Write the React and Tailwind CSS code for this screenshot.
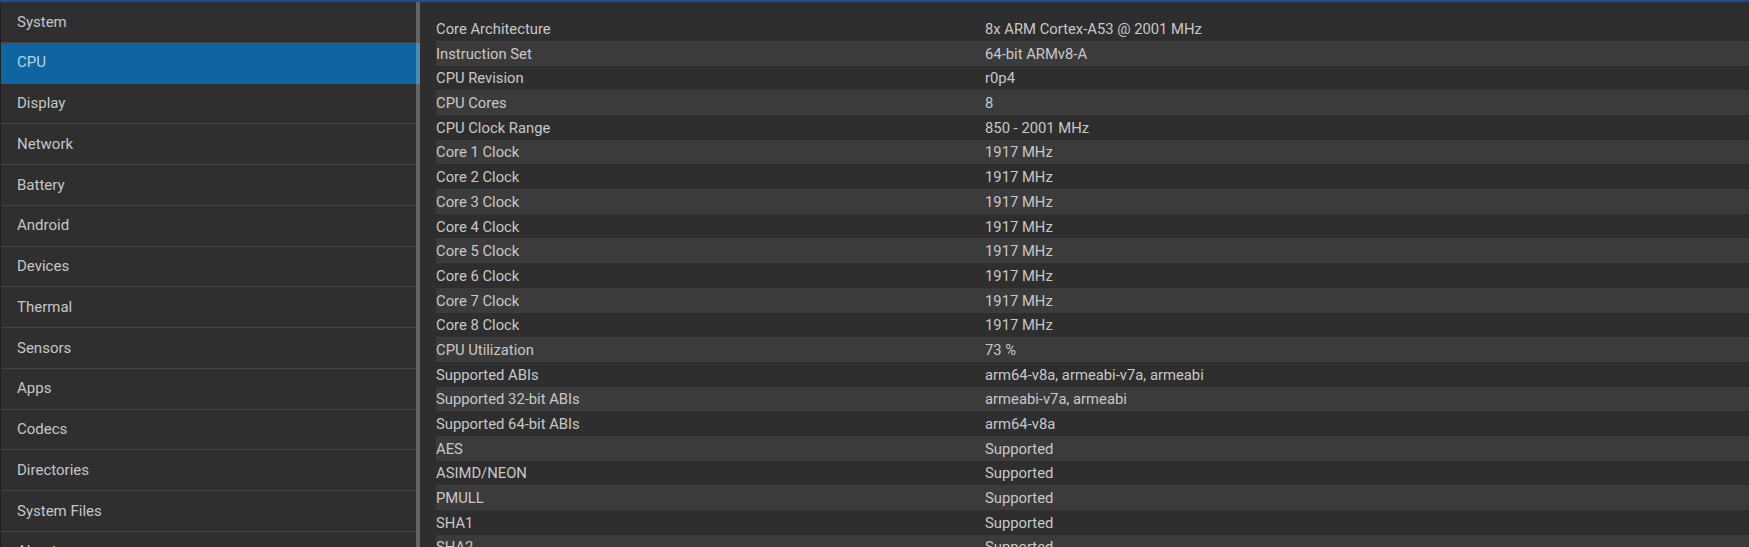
import React from "react";

const menu = [
  "System",
  "CPU",
  "Display",
  "Network",
  "Battery",
  "Android",
  "Devices",
  "Thermal",
  "Sensors",
  "Apps",
  "Codecs",
  "Directories",
  "System Files",
  "About",
];

const rows = [
  ["Core Architecture", "8x ARM Cortex-A53 @ 2001 MHz"],
  ["Instruction Set", "64-bit ARMv8-A"],
  ["CPU Revision", "r0p4"],
  ["CPU Cores", "8"],
  ["CPU Clock Range", "850 - 2001 MHz"],
  ["Core 1 Clock", "1917 MHz"],
  ["Core 2 Clock", "1917 MHz"],
  ["Core 3 Clock", "1917 MHz"],
  ["Core 4 Clock", "1917 MHz"],
  ["Core 5 Clock", "1917 MHz"],
  ["Core 6 Clock", "1917 MHz"],
  ["Core 7 Clock", "1917 MHz"],
  ["Core 8 Clock", "1917 MHz"],
  ["CPU Utilization", "73 %"],
  ["Supported ABIs", "arm64-v8a, armeabi-v7a, armeabi"],
  ["Supported 32-bit ABIs", "armeabi-v7a, armeabi"],
  ["Supported 64-bit ABIs", "arm64-v8a"],
  ["AES", "Supported"],
  ["ASIMD/NEON", "Supported"],
  ["PMULL", "Supported"],
  ["SHA1", "Supported"],
  ["SHA2", "Supported"],
];

const App = () => {
  const selected = "CPU";

  return (
    <div className="w-[1749px] h-[547px] overflow-hidden flex flex-col bg-[#2e2e2e] font-['Roboto',sans-serif]">
      {/* top accent line */}
      <div className="h-[2px] bg-[#1d4b9b] shrink-0" />

      <div className="flex flex-1 min-h-0">
        {/* Sidebar */}
        <aside className="w-[420px] shrink-0 border-l border-[#222222] bg-[#2f2f2f]">
          {menu.map((item) => (
            <div
              key={item}
              className={`flex h-[40.75px] ${
                item === selected ? "bg-[#0f65a1]" : ""
              }`}
            >
              <div
                className={`flex-1 flex items-center pl-4 text-[15px] border-b ${
                  item === selected
                    ? "text-[#b8d3ea] border-[#0f65a1]"
                    : "text-[#c6c6c6] border-[#444444]"
                }`}
              >
                {item}
              </div>
              <div className="w-1 bg-white/25" />
            </div>
          ))}
        </aside>

        {/* CPU details */}
        <main className="flex-1 min-w-0 pl-4 pt-[14.3px]">
          {rows.map(([label, value], index) => (
            <div
              key={label}
              className={`flex items-center h-[24.7px] pt-px text-[14.8px] text-[#c8c8c8] ${
                index % 2 === 1 ? "bg-[#3b3b3b]" : ""
              }`}
            >
              <div className="w-[549px] shrink-0">{label}</div>
              <div>{value}</div>
            </div>
          ))}
        </main>
      </div>
    </div>
  );
};

export default App;
